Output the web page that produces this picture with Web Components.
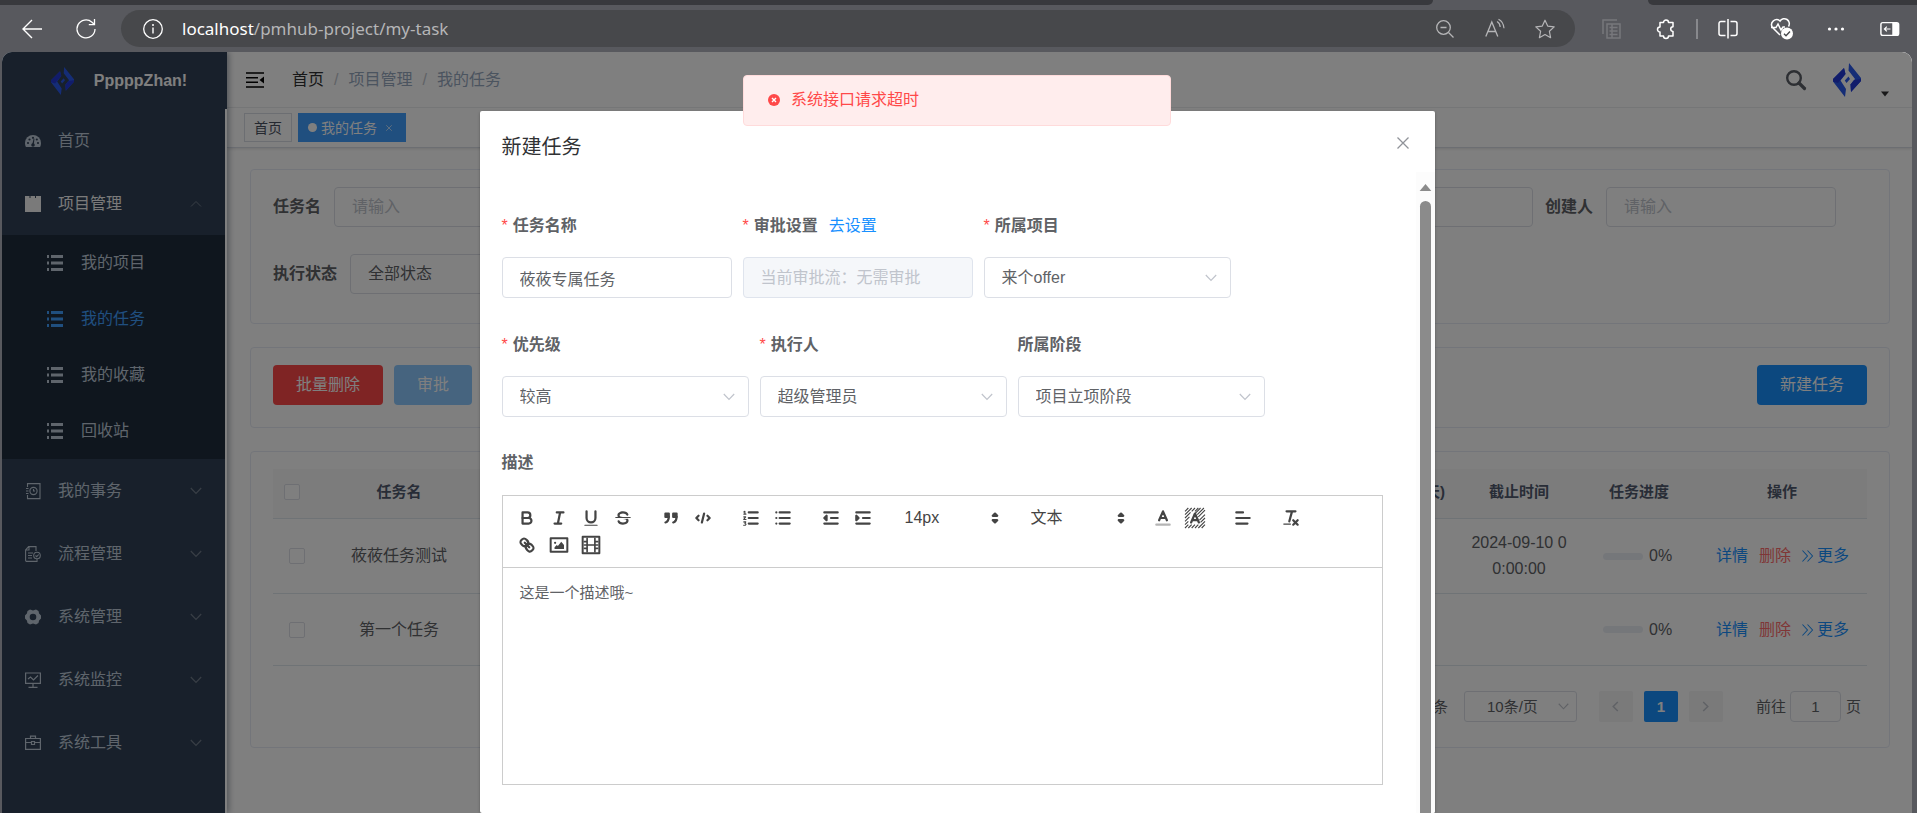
<!DOCTYPE html>
<html lang="zh-CN">
<head>
<meta charset="utf-8">
<title>PmHub - 我的任务</title>
<style>
html, body { margin: 0; height: 100%; }
body { font: 16px/24px "Liberation Sans", "Noto Sans CJK SC", sans-serif; color: #606266; background: #58595e; overflow: hidden; }
</style>
</head>
<body>
<pm-shell></pm-shell>
<script>
const ICONS = {
  back: ['0 0 20 20', '<path d="M20 10H1M10 1L1 10l9 9" fill="none" stroke="currentColor" stroke-width="1.4"/>'],
  reload: ['0 0 20 20', '<path d="M19 10a9 9 0 1 1-3-6.800L18.500 5.500M18.500 0v5.700h-5.700" fill="none" stroke="currentColor" stroke-width="1.3"/>'],
  info: ['0 0 20 20', '<circle cx="10" cy="10" r="9.300" fill="none" stroke="currentColor" stroke-width="1.300"/><path d="M10 8.500v6" stroke="currentColor" stroke-width="1.400"/><circle cx="10" cy="6" r="1" fill="currentColor"/>'],
  zoomout: ['0 0 20 20', '<circle cx="8.500" cy="8.500" r="6.800" fill="none" stroke="currentColor" stroke-width="1.300"/><path d="M13.500 13.500l5 5M5.500 8.500h6" stroke="currentColor" stroke-width="1.300"/>'],
  read: ['0 0 20 20', '<path d="M.800 17.500L6.800 3l6 14.500M3 12.500h7.800" fill="none" stroke="currentColor" stroke-width="1.300"/><path d="M12 2.500c2 1 3 3 3.200 5.500M13.500.300c3.500 1.800 5.200 5 5.500 9" fill="none" stroke="currentColor" stroke-width="1.200"/>'],
  star: ['0 0 20 20', '<path d="M10 1.200l2.700 5.900 6.500.8-4.800 4.400 1.200 6.400L10 15.600l-5.600 3.100 1.200-6.400L.8 7.900l6.500-.8z" fill="none" stroke="currentColor" stroke-width="1.200" stroke-linejoin="round"/>'],
  copy: ['0 0 20 20', '<path d="M1 15V1h14M5 19V5h13v14zM7.500 8.500h8M7.500 12h8M7.500 15.500h8M10 5v14" fill="none" stroke="currentColor" stroke-width="1.500"/>'],
  puzzle: ['0 0 20 20', '<path d="M4 3.500h3.500a2.500 2.500 0 0 1 5 0H17v4.300a2.300 2.300 0 1 0 0 4.600V17h-4.500a2.500 2.500 0 0 1-5 0H4v-4a2.500 2.500 0 1 1 0-5z" fill="none" stroke="currentColor" stroke-width="1.500" stroke-linejoin="round"/>'],
  split: ['0 0 20 20', '<path d="M7.500 2.500H3a2 2 0 0 0-2 2v10a2 2 0 0 0 2 2h4.500M12.500 2.500H17a2 2 0 0 1 2 2v10a2 2 0 0 1-2 2h-4.500M10 0v19.500" fill="none" stroke="currentColor" stroke-width="1.500"/>'],
  heart: ['0 0 24 22', '<path d="M10 17L2.500 9.500A5 5 0 0 1 10 3a5 5 0 0 1 8.500 5.500M1 9.500h5l2-3.500 3 6 2-3h2" fill="none" stroke="currentColor" stroke-width="1.500"/><circle cx="17" cy="15.500" r="6" fill="currentColor"/><path d="M14 15.700l2 2 4-4.200" fill="none" stroke="#47484b" stroke-width="1.400"/>'],
  dots: ['0 0 20 20', '<g fill="currentColor"><circle cx="3.500" cy="10" r="1.600"/><circle cx="10" cy="10" r="1.600"/><circle cx="16.500" cy="10" r="1.600"/></g>'],
  panel: ['0 0 22 20', '<rect x="1" y="3" width="19.500" height="14" rx="2" fill="none" stroke="currentColor" stroke-width="1.600"/><path d="M13.500 3h5a2 2 0 0 1 2 2v10a2 2 0 0 1-2 2h-5z" fill="currentColor"/><path d="M11.500 10H5M7.500 7.300L4.800 10l2.700 2.700" fill="none" stroke="currentColor" stroke-width="1.300"/>'],
  logo: ['0 0 28 34', '<path fill="#2b5aed" d="M11 5l1.500 6-5 6.500L13 26l-1 8L0 18.500V16z"/><path fill="#2239d6" d="M11 5l1.500 6L5 20 0 18.500V16z"/><path fill="#2b5aed" d="M16 0l12 15v3L18 29l-.500-7.500 4.500-5.500-6.500-8.500z"/><path fill="#2239d6" d="M21 17l7-1v2L18 29l-.500-7.500z"/><path fill="#2b5aed" d="M15.500 13.500l1.500 2.500-3.500 4-1.700-2.500z"/>'],
  fold: ['0 0 18 16', '<path d="M0 1h18M0 5.700h12M0 10.300h12M0 15h18" stroke="currentColor" stroke-width="1.500"/><path d="M18 4.500v7L13.500 8z" fill="currentColor"/>'],
  search: ['0 0 20 20', '<circle cx="8" cy="8" r="6.800" fill="none" stroke="currentColor" stroke-width="2.400"/><path d="M13 13L18.500 18.500" stroke="currentColor" stroke-width="3.200" stroke-linecap="round"/>'],
  dash: ['0 0 16 16', '<path fill="currentColor" d="M8 2a8 8 0 0 0-8 8c0 1.500.4 3 1 4h14c.6-1 1-2.500 1-4a8 8 0 0 0-8-8z"/><g fill="#304156"><circle cx="3" cy="10" r="1.100"/><circle cx="4.500" cy="6.500" r="1.100"/><circle cx="8" cy="4.800" r="1.100"/><circle cx="11.800" cy="6.500" r="1.100"/><circle cx="13" cy="10" r="1.100"/><circle cx="8" cy="12" r="1.800"/><path d="M7.300 11l1.400-5.500.8.200-.7 5.600z"/></g>'],
  book: ['0 0 16 16', '<path fill="currentColor" d="M0 0h4.500v2h1V0h4.500v2h1V0h5v16H0z"/>'],
  list: ['0 0 16 16', '<path fill="currentColor" d="M0 0h2v3H0zM4 0h12v3H4zM0 6.500h2v3H0zM4 6.500h12v3H4zM0 13h2v3H0zM4 13h12v3H4z"/>'],
  affair: ['0 0 16 16', '<g fill="none" stroke="currentColor" stroke-width="1.100"><path d="M2.500 4V.600H15v15H2.500V12M1 5.500h2.500M1 8h2.500M1 10.500h2.500"/><circle cx="8.500" cy="8" r="3.600"/><path d="M8.500 6v2H10"/></g>'],
  flow: ['0 0 16 16', '<g fill="none" stroke="currentColor" stroke-width="1.100"><path d="M11 15.400H1.800c-.7 0-1.200-.5-1.200-1.200V4l3-3.400H11v4.500M4 .600V4H1M3 7h5M3 9.500h4M3 12h4"/><circle cx="12" cy="9.500" r="3.300"/><path d="M10.500 9.500l1.200 1.200 2-2.200M12 13v2.500h-2"/></g>'],
  gear: ['0 0 16 16', '<path fill="currentColor" fill-rule="evenodd" d="M5 .500l3 1 3-1 2.500 1.500.6 2.500L16 6.500v3l-1.900 2-.6 2.500L11 15.500l-3-1-3 1L2.500 14l-.6-2.500L0 9.500v-3l1.900-2L2.500 2zM8 4.700a3.300 3.300 0 1 0 0 6.600 3.300 3.300 0 0 0 0-6.600z"/>'],
  monitor: ['0 0 16 16', '<path d="M.600 1h14.800v10.400H.600zM8 11.500v3.800M3.500 15.400h9M3 7l2.500-2 3 3 4.500-4.500" fill="none" stroke="currentColor" stroke-width="1.200"/>'],
  tool: ['0 0 16 16', '<path d="M.600 3.500h14.800v10.900H.600zM5.500 3.500V1.200h5v2.300M.600 7.500H6.500M9.500 7.500h5.900M6.500 6.500h3v3h-3z" fill="none" stroke="currentColor" stroke-width="1.200"/>'],
  up: ['0 0 12 12', '<path d="M1 8.500l5-5 5 5" fill="none" stroke="currentColor" stroke-width="1"/>'],
  down: ['0 0 12 12', '<path d="M.800 3l5.200 5.500L11.200 3" fill="none" stroke="currentColor" stroke-width="1.200"/>'],
  left: ['0 0 12 12', '<path d="M8.500 1L3.500 6l5 5" fill="none" stroke="currentColor" stroke-width="1.600"/>'],
  right: ['0 0 12 12', '<path d="M3.500 1l5 5-5 5" fill="none" stroke="currentColor" stroke-width="1.600"/>'],
  more: ['0 0 12 12', '<path d="M.500 0l5.500 6-5.500 6M6 0l5.500 6L6 12" fill="none" stroke="currentColor" stroke-width="1.100"/>'],
  close: ['0 0 12 12', '<path d="M.500.500l11 11M11.500.500l-11 11" stroke="currentColor" stroke-width="1.300"/>'],
  error: ['0 0 12 12', '<circle cx="6" cy="6" r="6" fill="currentColor"/><path d="M4 4l4 4M8 4l-4 4" stroke="#fff" stroke-width="1.400"/>'],
  caret: ['0 0 10 6', '<path d="M0 0h10L5 6z" fill="currentColor"/>'],
  bold: ['0 0 18 18', '<path class="s" d="M5,4H9.500A2.500,2.500,0,0,1,12,6.500v0A2.500,2.500,0,0,1,9.500,9H5A0,0,0,0,1,5,9V4A0,0,0,0,1,5,4Z"/><path class="s" d="M5,9h5.500A2.500,2.500,0,0,1,13,11.500v0A2.500,2.500,0,0,1,10.500,14H5a0,0,0,0,1,0,0V9A0,0,0,0,1,5,9Z"/>'],
  italic: ['0 0 18 18', '<path class="s" d="M7 4h6M5 14h6M8 14l2-10"/>'],
  underline: ['0 0 18 18', '<path class="s" d="M5,3V9a4.012,4.012,0,0,0,4,4H9a4.012,4.012,0,0,0,4-4V3"/><rect class="f" height="1" rx=".5" width="12" x="3" y="15"/>'],
  strike: ['0 0 18 18', '<path class="s" style="stroke-width:1" d="M15.500 8.500h-13"/><path class="f" d="M9.007,8C6.542,7.791,6,7.519,6,6.500,6,5.792,7.283,5,9,5c1.571,0,2.765.679,2.969,1.309a1,1,0,0,0,1.900-.617C13.356,4.106,11.354,3,9,3,6.200,3,4,4.538,4,6.500a3.200,3.200,0,0,0,.5,1.843Z"/><path class="f" d="M8.984,10C11.457,10.208,12,10.479,12,11.500c0,.708-1.283,1.500-3,1.500-1.571,0-2.765-.679-2.969-1.309a1,1,0,1,0-1.900.617C4.644,13.894,6.646,15,9,15c2.800,0,5-1.538,5-3.500a3.200,3.200,0,0,0-.5-1.843Z"/>'],
  quote: ['0 0 18 18', '<rect class="f s" height="3" width="3" x="4" y="5"/><rect class="f s" height="3" width="3" x="11" y="5"/><path class="f s" d="M7,8c0,4.031-3,5-3,5M14,8c0,4.031-3,5-3,5" style="fill-rule:evenodd"/>'],
  code: ['0 0 18 18', '<path class="s" d="M5 7L3 9l2 2M13 7l2 2-2 2M10 5L8 13"/>'],
  ordered: ['0 0 18 18', '<path class="s" d="M7 4h8M7 9h8M7 14h8"/><path class="s" style="stroke-width:1" d="M2.500 5.500h2M3.500 5.500V3l-1 .500M2.500 8h1.700L2.500 10.300h2M2.500 12.500h1.800l-.800 1.300 1 .700-.600 1H2.400"/>'],
  bullet: ['0 0 18 18', '<path class="s" d="M6 4h9M6 9h9M6 14h9M3 4h0M3 9h0M3 14h0"/>'],
  outdent: ['0 0 18 18', '<path class="s" d="M3 14h12M3 4h12M9 9h6"/><path class="f s" d="M5 7v4L3 9z"/>'],
  indent: ['0 0 18 18', '<path class="s" d="M3 14h12M3 4h12M9 9h6"/><path class="f s" d="M3 7v4l2-2z"/>'],
  sort: ['0 0 18 18', '<path class="f s" d="M7 11l2 2 2-2zM7 7l2-2 2 2z"/>'],
  color: ['0 0 18 18', '<path d="M3 15h12" stroke="#444" stroke-opacity=".4" stroke-width="2" stroke-linecap="round"/><path class="s" d="M5.500 11L9 3l3.500 8M11.600 9H6.400"/>'],
  bg: ['0 0 18 18', '<path d="M0 3l3-3M0 6l6-6M0 9l5-5M0 12l4-4M0 15l3-3M0 18l3-3M3 18l3-3M6 18l3-3M9 18l3-3M12 18l6-6M15 18l3-3M14 13l4-4M13 11l5-5M12 8l6-6M11 6l6-6M8 6l6-6M6 3l3-3M9 3l3-3" stroke="#444" stroke-width="1"/><path class="s" d="M5.500 13L9 5l3.500 8M11.600 11H6.400"/>'],
  align: ['0 0 18 18', '<path class="s" d="M3 9h12M3 14h10M3 4h6"/>'],
  clean: ['0 0 18 18', '<path class="s" d="M5 3h8M7.500 12L9.800 3.500M11 11l4 4M15 11l-4 4"/><rect class="f" height="1" rx=".5" width="7" x="2" y="14"/>'],
  link: ['0 0 18 18', '<path class="s" d="M7 7l4 4"/><path class="s" d="M8.900,4.577a3.476,3.476,0,0,1,.36,4.679A3.476,3.476,0,0,1,4.577,8.900C3.185,7.500,2.035,6.400,4.217,4.217S7.500,3.185,8.900,4.577Z"/><path class="s" d="M13.423,9.100a3.476,3.476,0,0,0-4.679-.36,3.476,3.476,0,0,0,.36,4.679c1.392,1.392,2.500,2.542,4.679.36S14.815,10.500,13.423,9.100Z"/>'],
  image: ['0 0 18 18', '<rect class="s" height="12" width="15" x="1.500" y="3" style="stroke-width:1.800"/><circle class="f" cx="5.500" cy="7" r="1"/><path class="f" d="M5 12.500V11l2-2 1 1 3-4 2.500 3v3.500z"/>'],
  video: ['0 0 18 18', '<rect class="s" height="15" width="15" x="1.500" y="1.500" style="stroke-width:1.800"/><path class="s" style="stroke-width:1.500" d="M5.500 3v12M12.500 3v12M5.500 9h7M3 6h2M3 9h2M3 12h2M13 6h2M13 9h2M13 12h2"/>']
};

const RESET = `*,*::before,*::after{box-sizing:border-box}
button,input,select{font:inherit;color:inherit;margin:0}
button{border:0;padding:0;background:none;cursor:pointer}
a{color:inherit;text-decoration:none}`;

function component(name, render) {
  customElements.define(name, class extends HTMLElement {
    constructor() { super(); this.attachShadow({ mode: 'open' }); }
    connectedCallback() {
      const t = document.createElement('template');
      const at = (k, d = '') => this.getAttribute(k) ?? d;
      t.innerHTML = `<style>${RESET}</style>` + render(at, this);
      this.shadowRoot.replaceChildren(t.content.cloneNode(true));
    }
  });
}

component('ui-icon', at => {
  const [box, body] = ICONS[at('name')];
  return `<style>:host{display:inline-flex;flex:none;width:16px;height:16px}svg{width:100%;height:100%;overflow:visible}
  .s{fill:none;stroke:currentColor;stroke-width:2;stroke-linecap:round;stroke-linejoin:round}.f{fill:currentColor}.f.s{fill:currentColor}
  </style><svg viewBox="${box}" aria-hidden="true">${body}</svg>`;
});

/* Browser window: tab strip and toolbar */
component('browser-bar', () => `<style>
:host{display:block;color:#fff}
.tabs{display:flex;height:5px}
.tabs i{background:#38393d}
.tabs .l{flex:1;border-bottom-right-radius:5px}.tabs .r{width:269px;border-bottom-left-radius:5px}.tabs .gap{background:none;width:215px}
nav{display:flex;align-items:center;height:47px;padding-left:5px}
button{display:flex;align-items:center;justify-content:center;width:54px;height:36px}
ui-icon{width:20px;height:20px}
.wide{width:24px;height:22px}
.url{flex:1;display:flex;align-items:center;height:37px;margin:0 10px 0 8px;border-radius:19px;background:#47484b;padding:0 5px 0 12px;color:#b5b5b7}
.url button{width:50px}
.url .info{color:#fff;width:40px}
p{flex:1;margin:0 0 0 9px;font:17px/24px "Noto Sans",sans-serif}
b{font-weight:400;color:#fff}
.off{color:#77787c}
hr{width:2px;height:20px;border:0;background:#88898d;margin:0 3px}
.pair{display:flex}
</style>
<div class="tabs"><i class="l"></i><i class="gap"></i><i class="r"></i></div>
<nav><div class="pair"><button aria-label="后退"><ui-icon name="back"></ui-icon></button><button aria-label="刷新"><ui-icon name="reload"></ui-icon></button></div>
<div class="url"><button class="info" aria-label="站点信息"><ui-icon name="info"></ui-icon></button><p><b>localhost</b>/pmhub-project/my-task</p>
<button aria-label="缩小"><ui-icon name="zoomout"></ui-icon></button><button aria-label="朗读"><ui-icon name="read"></ui-icon></button><button aria-label="收藏"><ui-icon name="star"></ui-icon></button></div>
<button class="off" aria-label="复制"><ui-icon name="copy"></ui-icon></button><button aria-label="扩展"><ui-icon name="puzzle"></ui-icon></button><hr>
<button aria-label="分屏"><ui-icon name="split"></ui-icon></button><button aria-label="健康"><ui-icon class="wide" name="heart"></ui-icon></button><button aria-label="更多"><ui-icon name="dots"></ui-icon></button><button aria-label="侧栏"><ui-icon name="panel"></ui-icon></button></nav>`);

component('nav-item', at => `<style>
:host{display:block;color:#bfcbd9}
a{display:flex;align-items:center;height:63px;padding:0 23px}
span{margin-left:17px;flex:1}
.arrow{width:12px;height:12px;color:#717c8b}
:host([sub]) a{height:56px;padding-left:45px}
:host([sub]) span{margin-left:18px}
:host([open]){color:#f4f4f5}
:host([active]){color:#409eff}
</style><a href="#"><ui-icon name="${at('icon')}"></ui-icon><span><slot></slot></span>${at('arrow') ? `<ui-icon class="arrow" name="${at('arrow')}"></ui-icon>` : ''}</a>`);

component('side-bar', () => `<style>
:host{display:flex;flex-direction:column;background:#304156;position:relative;box-shadow:2px 0 6px rgba(0,21,41,.35)}
header{display:flex;align-items:center;justify-content:center;height:57px;padding-left:9px;gap:20px;color:#fff;font-weight:700}
header ui-icon{width:23px;height:28px}
nav{flex:1;border-right:2px solid #fff}
.sub{background:#1f2d3d}
</style>
<header><ui-icon name="logo"></ui-icon><span>PppppZhan!</span></header>
<nav><nav-item icon="dash">首页</nav-item><nav-item icon="book" open arrow="up">项目管理</nav-item>
<div class="sub"><nav-item sub icon="list">我的项目</nav-item><nav-item sub active icon="list">我的任务</nav-item><nav-item sub icon="list">我的收藏</nav-item><nav-item sub icon="list">回收站</nav-item></div>
<nav-item icon="affair" arrow="down">我的事务</nav-item><nav-item icon="flow" arrow="down">流程管理</nav-item><nav-item icon="gear" arrow="down">系统管理</nav-item><nav-item icon="monitor" arrow="down">系统监控</nav-item><nav-item icon="tool" arrow="down">系统工具</nav-item></nav>`);

component('top-bar', () => `<style>
:host{display:block;background:#fff}
.nav{display:flex;align-items:center;height:56px;padding:0 23px 0 19px;border-bottom:1px solid #f0f1f3}
.fold{color:#000;margin-right:28px;display:flex}
.fold ui-icon{width:18px}
.crumbs{display:flex;gap:10px;flex:1;color:#97a8be}
.crumbs a{color:#303133}.crumbs i{font-style:normal;color:#c0c4cc}
.find{display:flex;margin-right:27px;color:#5a5e66}.find ui-icon{width:20px;height:20px}
.me{display:flex;align-items:flex-end;gap:20px;color:#303133}
.me .logo{width:28px;height:34px}.me .caret{width:8px;height:6px}
.tags{display:flex;align-items:center;gap:6px;height:40px;padding:0 17px;border-bottom:1px solid #d8dce5;box-shadow:0 1px 3px rgba(0,0,0,.12)}
.tags a{display:flex;align-items:center;height:29px;padding:0 9px;border:1px solid #d8dce5;font-size:14px;color:#495060;line-height:20px}
.tags a.on{background:#409eff;border-color:#409eff;color:#fff;gap:4px;padding-right:13px}
.tags i{width:9px;height:9px;border-radius:50%;background:#fff}
.tags .x{width:6px;height:6px;margin-left:5px}
</style>
<div class="nav"><button class="fold" aria-label="折叠菜单"><ui-icon name="fold"></ui-icon></button>
<div class="crumbs"><a href="#">首页</a><i>/</i><span>项目管理</span><i>/</i><span>我的任务</span></div>
<button class="find" aria-label="搜索"><ui-icon name="search"></ui-icon></button>
<button class="me" aria-label="用户"><ui-icon class="logo" name="logo"></ui-icon><ui-icon class="caret" name="caret"></ui-icon></button></div>
<div class="tags"><a href="#">首页</a><a href="#" class="on"><i></i><span>我的任务</span><ui-icon class="x" name="close"></ui-icon></a></div>`);

component('panel-card', () => `<style>
:host{display:block;border:1px solid #e6ebf5;border-radius:4px;background:#fff;padding:17px 22px}
</style><slot></slot>`);

/* Labelled input or select; top places the label over the control */
component('form-field', at => {
  const c = at('type') === 'select'
    ? `<div class="wrap"><select id="c" aria-label="${at('label') || at('aria')}"><option>${at('value')}</option></select><ui-icon name="down"></ui-icon></div>`
    : `<input id="c" type="text" aria-label="${at('label') || at('aria')}" value="${at('value')}" placeholder="${at('placeholder')}" ${at('off') ? 'disabled' : ''}>`;
  return `<style>
:host{display:flex;align-items:center;gap:13px}
label{font-weight:700;line-height:40px;white-space:nowrap}
input,select{display:block;width:230px;height:40px;border:1px solid #dcdfe6;border-radius:4px;padding:0 17px;background:#fff;color:#606266;appearance:none;outline:0;opacity:1}
::placeholder{color:#c0c4cc;opacity:1}
input:disabled{background:#f5f7fa;border-color:#dfe4ed}
select{width:247px}
.wrap{display:grid;align-items:center}
.wrap>*{grid-area:1/1}
.wrap ui-icon{justify-self:end;width:12px;height:12px;margin-right:14px;color:#c0c4cc;pointer-events:none}
:host([top]){flex-direction:column;align-items:flex-start;gap:11px}
:host([top]) label{line-height:41px}
:host([top]) input,:host([top]) select{height:41px}
.head{display:flex;gap:11px;align-items:center}
em{font-style:normal;font-weight:400;color:#ff4949;margin-right:5px}
</style><div class="head"><label for="c">${at('must') ? '<em>*</em>' : ''}${at('label')}</label><slot></slot></div>${c}`;
});

component('ui-button', at => `<style>
:host{display:inline-flex}
button{height:40px;padding:0 23px;border-radius:4px;background:${at('color')};color:#fff;line-height:24px}
</style><button><slot></slot></button>`);

component('task-table', () => {
  const row = (name, date) => `<tr><td class="pick"><input type="checkbox" aria-label="选择${name}"></td><td>${name}</td><td></td><td></td><td class="date">${date}</td>
<td><div class="prog"><i></i><span>0%</span></div></td><td><div class="acts"><a href="#">详情</a><a href="#" class="del">删除</a><a href="#" class="more"><ui-icon name="more"></ui-icon>更多</a></div></td></tr>`;
  return `<style>
:host{display:block}
table{width:100%;table-layout:fixed;border-collapse:separate;border-spacing:0;text-align:center}
th,td{padding:0 12px;border-bottom:1px solid #dfe6ec}
th{height:50px;padding-bottom:4px;background:#f8f8f9;color:#515a6e;font-size:15px;line-height:22px;font-weight:700}
td{height:72px;line-height:26px}
tbody tr:first-child td{height:75px}
.pick{text-align:left;padding-left:16px;padding-right:0}th.pick{padding-left:11px}
.date{word-break:break-all}
.part{text-align:right}
input{appearance:none;display:block;width:16px;height:16px;border:1px solid #dcdfe6;border-radius:2px;background:#fff}
.prog{display:flex;align-items:center;gap:6px;margin-left:10px}
.prog i{width:40px;height:7px;border-radius:4px;background:#ebeef5}
.acts{display:flex;align-items:center;gap:11px;color:#1890ff;white-space:nowrap;margin-left:7px}
.del{color:#ff6d6d}
.more{display:flex;align-items:center;gap:4px}.more ui-icon{width:11px;height:12px}
</style><table><colgroup><col style="width:53px"><col style="width:146px"><col><col style="width:120px"><col style="width:124px"><col style="width:116px"><col style="width:170px"></colgroup>
<thead><tr><th class="pick"><input type="checkbox" aria-label="全选"></th><th>任务名</th><th></th><th class="part">天)</th><th>截止时间</th><th>任务进度</th><th>操作</th></tr></thead>
<tbody>${row('莜莜任务测试', '2024-09-10 00:00:00')}${row('第一个任务', '')}</tbody></table>`;
});

component('page-pager', () => `<style>
:host{display:flex;justify-content:flex-end;align-items:center;margin:25px 6px 8px 0;font-size:15px;line-height:22px}
.size{display:grid;align-items:center;margin:0 22px 0 16px}.size>*{grid-area:1/1}
select{appearance:none;width:113px;height:31px;border:1px solid #dcdfe6;border-radius:3px;background:#fff;padding:0 22px;color:#606266}
.size ui-icon{justify-self:end;margin-right:8px;width:11px;height:11px;color:#c0c4cc}
button{display:flex;align-items:center;justify-content:center;width:34px;height:31px;border-radius:2px;background:#f4f4f5;color:#c0c4cc;margin-right:11px}
button ui-icon{width:11px;height:11px}
.on{background:#1890ff;color:#fff;font-weight:700}
label{margin:0 4px 0 22px}
input{width:51px;height:31px;border:1px solid #dcdfe6;border-radius:4px;text-align:center;background:#fff;color:#606266;margin-right:5px}
</style><span>条</span><div class="size"><select aria-label="每页条数"><option>10条/页</option></select><ui-icon name="down"></ui-icon></div>
<button aria-label="上一页"><ui-icon name="left"></ui-icon></button><button class="on">1</button><button aria-label="下一页"><ui-icon name="right"></ui-icon></button>
<label for="go">前往</label><input id="go" type="text" value="1"><span>页</span>`);

component('task-page', () => `<style>
:host{display:flex;flex-direction:column;gap:23px;padding:21px 22px 21px 23px}
.row{display:flex;gap:12px;padding-right:31px}
.row+.row{margin-top:27px}
.push{margin-left:auto}
.search{padding-bottom:29px}
.bar{display:flex;gap:11px;padding-bottom:5px}
</style>
<panel-card class="search"><div class="row"><form-field label="任务名" placeholder="请输入"></form-field><form-field class="push" aria="筛选"></form-field><form-field label="创建人" placeholder="请输入"></form-field></div>
<div class="row"><form-field type="select" label="执行状态" value="全部状态"></form-field></div></panel-card>
<panel-card><div class="bar"><ui-button color="#ff4949">批量删除</ui-button><ui-button color="#8cc8ff">审批</ui-button><ui-button class="push" color="#1890ff">新建任务</ui-button></div></panel-card>
<panel-card><task-table></task-table><page-pager></page-pager></panel-card>`);

component('rich-editor', () => {
  const g = (...n) => `<span class="g">${n.map(x => `<button aria-label="${x}"><ui-icon name="${x}"></ui-icon></button>`).join('')}</span>`;
  const p = (v, l) => `<span class="pick"><select aria-label="${l}"><option>${v}</option></select><ui-icon name="sort"></ui-icon></span>`;
  return `<style>
:host{display:block;border:1px solid #ccc;color:#444}
.bar{display:flex;flex-wrap:wrap;column-gap:16px;padding:8px 8px 9px;border-bottom:1px solid #ccc}
.g{display:flex}
button{display:flex;align-items:center;justify-content:center;width:32px;height:27px}
ui-icon{width:20px;height:20px}
.pick{display:grid;align-items:center;width:110px}.pick>*{grid-area:1/1}.pick ui-icon{justify-self:end;pointer-events:none}
select{appearance:none;border:0;background:none;padding:0 10px;height:27px;width:100%;color:#444;line-height:24px}
.text{min-height:216px;padding:14px 17px;font-size:15px;line-height:21px;outline:0;color:#606266}
</style><div class="bar">${g('bold', 'italic', 'underline', 'strike')}${g('quote', 'code')}${g('ordered', 'bullet')}${g('outdent', 'indent')}${p('14px', '字号')}${p('文本', '标题')}${g('color', 'bg')}${g('align')}${g('clean')}${g('link', 'image', 'video')}</div>
<div class="text" contenteditable="true" role="textbox" aria-label="描述">这是一个描述哦~</div>`;
});

component('task-dialog', () => `<style>
:host{display:flex;flex-direction:column;background:#fff;border-radius:2px;box-shadow:0 1px 3px rgba(0,0,0,.3);overflow:hidden}
header{display:flex;align-items:center;justify-content:space-between;height:61px;padding:11px 26px 0 22px;flex:none}
h2{margin:0;font-size:20px;line-height:26px;font-weight:400;color:#303133}
header button{display:flex;color:#909399;margin-bottom:8px}header ui-icon{width:12px;height:12px}
.body{flex:1;display:flex;min-height:0}
form{flex:1;padding:33px 33px 28px 22px;display:flex;flex-direction:column;gap:26px}
.row{display:flex;gap:11px}
a{color:#1890ff}
.label{display:block;font-weight:700;line-height:40px;margin-bottom:12px}
.scroll{width:19px;background:#fcfcfc;display:flex;flex-direction:column;align-items:center;padding-top:12px;gap:10px}
.scroll ui-icon{width:13px;height:7px;color:#8b8b8b;transform:rotate(180deg)}
.scroll i{flex:1;width:11px;border-radius:6px 6px 0 0;background:#8b8b8b}
</style><header><h2>新建任务</h2><button aria-label="关闭"><ui-icon name="close"></ui-icon></button></header>
<div class="body"><form>
<div class="row"><form-field top must="1" label="任务名称" value="莜莜专属任务"></form-field><form-field top must="1" off="1" label="审批设置" placeholder="当前审批流：无需审批"><a href="#">去设置</a></form-field><form-field top must="1" type="select" label="所属项目" value="来个offer"></form-field></div>
<div class="row"><form-field top must="1" type="select" label="优先级" value="较高"></form-field><form-field top must="1" type="select" label="执行人" value="超级管理员"></form-field><form-field top type="select" label="所属阶段" value="项目立项阶段"></form-field></div>
<div><span class="label">描述</span><rich-editor></rich-editor></div>
</form><div class="scroll"><ui-icon name="caret"></ui-icon><i></i></div></div>`);

component('toast-message', () => `<style>
:host{display:flex;align-items:center;gap:11px;width:428px;height:51px;padding:0 24px 2px;border:1px solid #ffdbdb;border-radius:4px;background:#ffeded;color:#ff4949;box-sizing:border-box}
ui-icon{width:12px;height:12px}
</style><ui-icon name="error"></ui-icon><span><slot></slot></span>`);

component('pm-shell', () => `<style>
:host{display:flex;flex-direction:column;height:100vh}
.view{flex:1;min-height:0;margin:0 5px 0 2px;position:relative;overflow:hidden;border-radius:10px 10px 0 0;background:#fff;display:grid;grid-template-columns:225px minmax(0,1fr)}
.shade{position:absolute;inset:0;background:rgba(0,0,0,.5);display:flex;justify-content:center;padding-top:59px}
task-dialog{width:50%}
toast-message{position:absolute;top:23px;left:50%;transform:translateX(-50%)}
</style><browser-bar></browser-bar>
<div class="view"><side-bar></side-bar><main><top-bar></top-bar><task-page></task-page></main>
<div class="shade"><task-dialog role="dialog" aria-label="新建任务"></task-dialog></div><toast-message role="alert">系统接口请求超时</toast-message></div>`);
</script>
</body>
</html>
